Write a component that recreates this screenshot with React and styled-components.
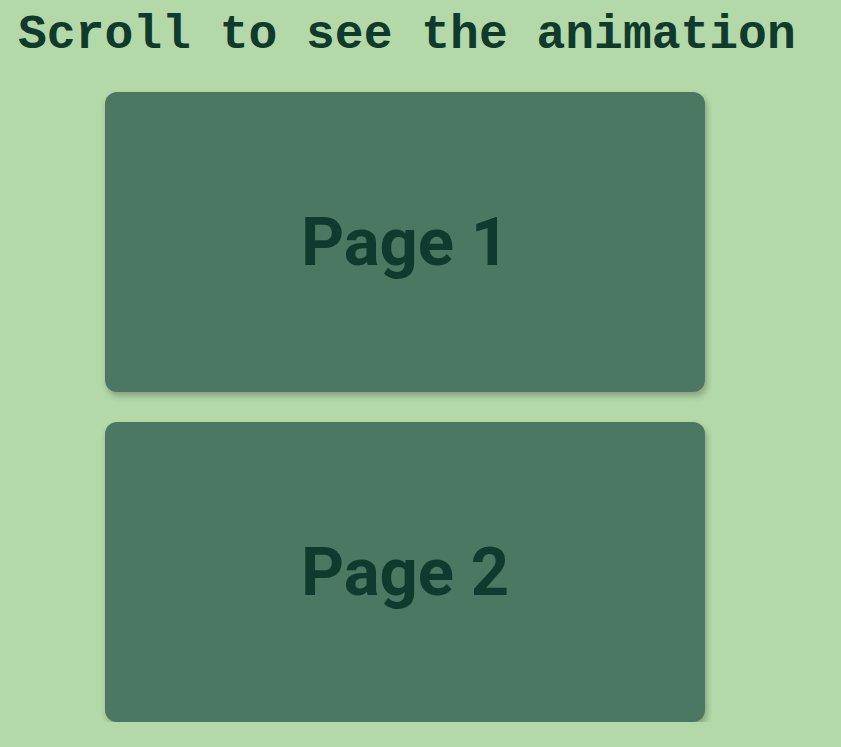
import styled, { createGlobalStyle } from "styled-components";

const GlobalStyle = createGlobalStyle`
  html, body {
    margin: 0;
    background: #b3d9a8;
  }
  body {
    overflow: hidden;
  }
`;

const Page = styled.main`
  padding: 8px 0 0 8px;
`;

const Title = styled.h1`
  margin: 0 0 0 10px;
  font-family: "Courier New", "Liberation Mono", monospace;
  font-weight: 700;
  font-size: 48px;
  line-height: 54px;
  color: #0f3a2d;
  white-space: nowrap;
`;

const Stack = styled.div`
  display: flex;
  flex-direction: column;
  gap: 30px;
  padding: 30px 0 0 97px;
`;

const Card = styled.section`
  width: 600px;
  height: 300px;
  border-radius: 12px;
  background: #4a7862;
  box-shadow: 2px 4px 6px rgba(0, 0, 0, 0.25);
  display: flex;
  align-items: center;
  justify-content: center;
`;

const CardLabel = styled.h2`
  margin: 0;
  font-family: Roboto, "Liberation Sans", sans-serif;
  font-weight: 700;
  font-size: 67px;
  color: #0f3a2d;
`;

const pages = ["Page 1", "Page 2"];

export default function App() {
  return (
    <>
      <GlobalStyle />
      <Page>
        <Title>Scroll to see the animation</Title>
        <Stack>
          {pages.map((p) => (
            <Card key={p}>
              <CardLabel>{p}</CardLabel>
            </Card>
          ))}
        </Stack>
      </Page>
    </>
  );
}
